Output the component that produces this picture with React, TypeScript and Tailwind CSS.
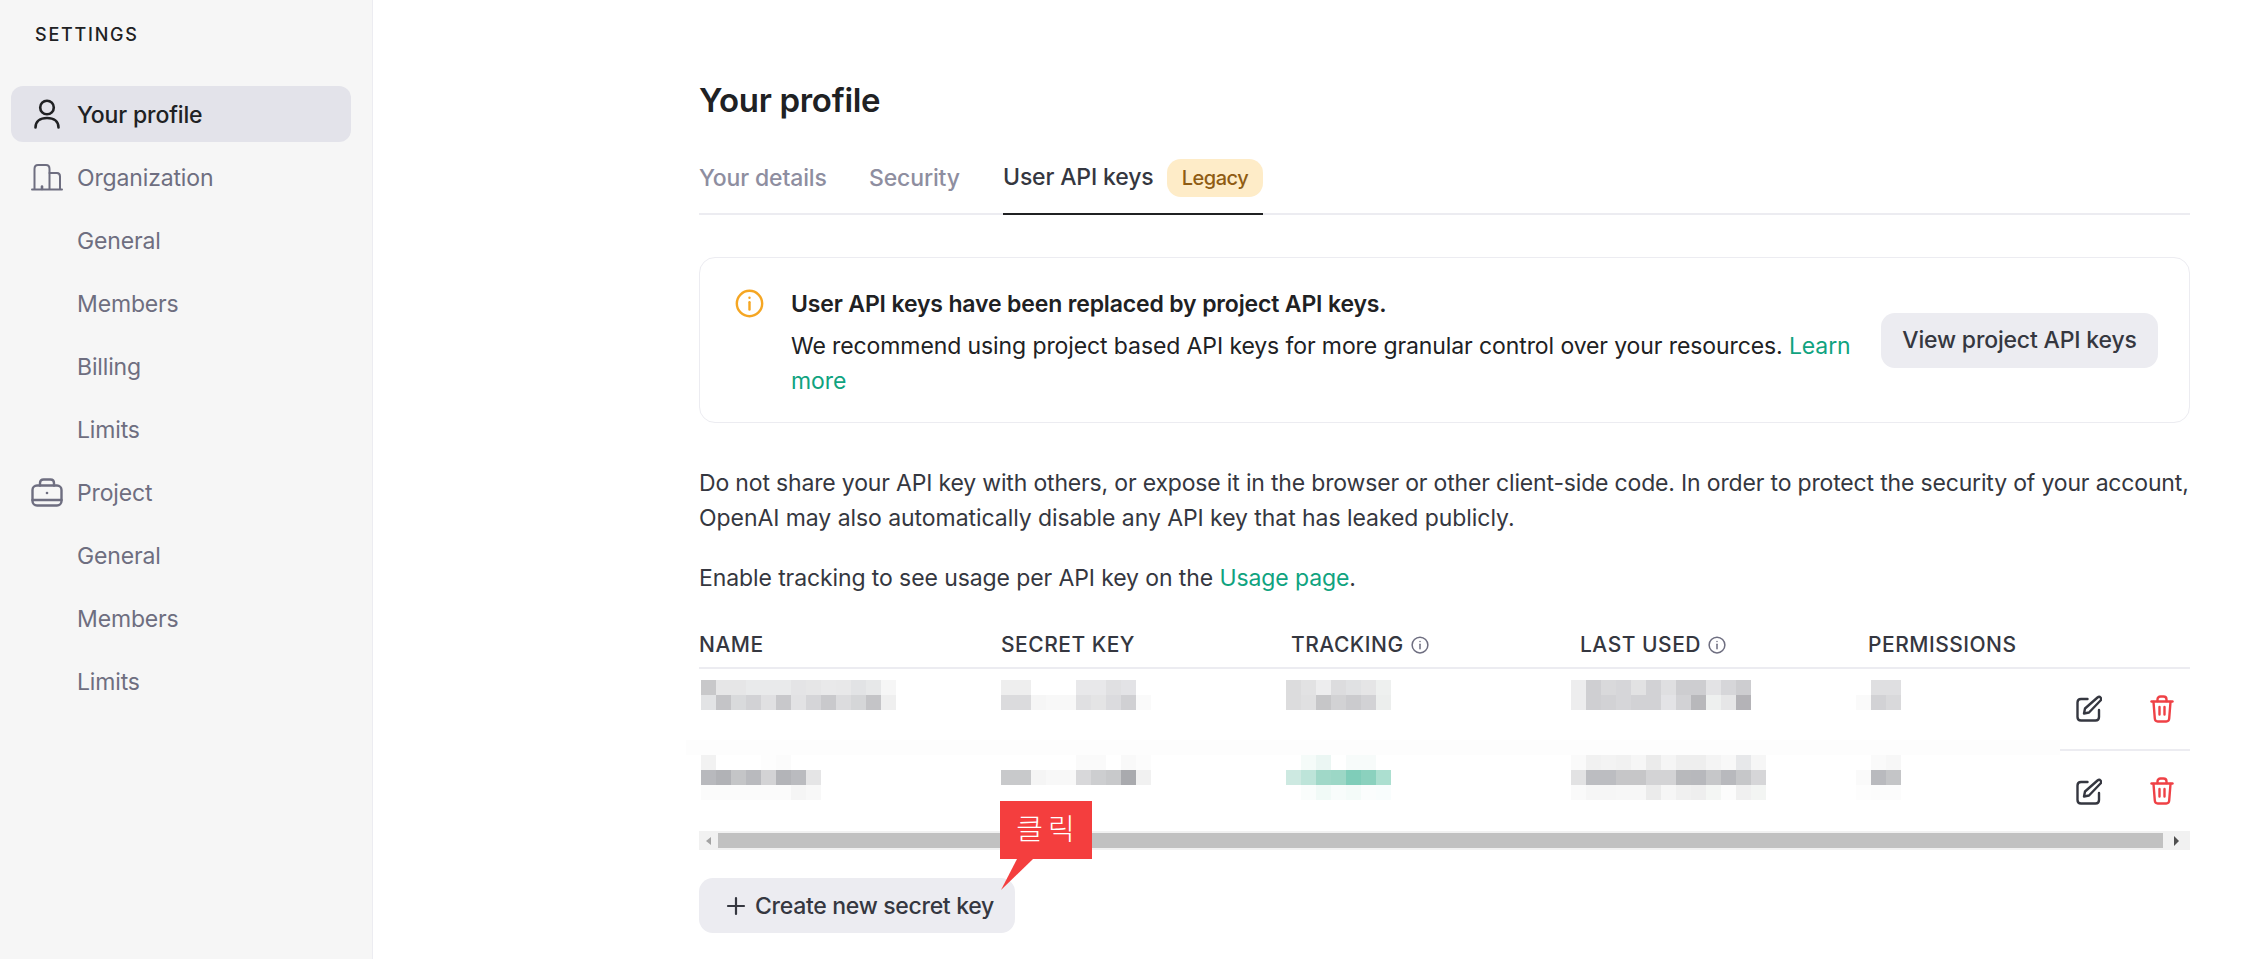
import type { ReactNode } from "react";

type Rows = string[][];
const name1: Rows = [["#c8c8ca","#e6e6e7","#e6e6e7","#e9eaeb","#e9eaeb","#e9eaeb","#e4e4e6","#e6e6e7","#e9e9ea","#e8e8e9","#e2e3e5","#e7e8e9","#f6f6f6"],["#e2e3e5","#c4c4c7","#d9dadc","#d2d2d5","#e0e0e2","#c8c8cb","#e2e2e4","#d5d5d8","#c9c9cc","#dcdcde","#d5d6d8","#c4c4c7","#efefef"]];
const name2: Rows = [["#f2f2f2","#fff","#fff","#fff","#fdfdfd","#fbfbfb","#fff","#fff"],["#b8b9bd","#b1b2b6","#c4c5c7","#b9babe","#d3d3d5","#b3b4b8","#babbbf","#e5e5e6"],["#fbfbfb","#fbfbfb","#fbfbfb","#fbfbfb","#fbfbfb","#fbfbfb","#f5f5f5","#f8f8f8"]];
const key1: Rows = [["#eeeeee","#eeeeee","#fff","#fff","#fff","#e8e8ea","#e8e8ea","#e0e0e2","#e3e3e6","#fff"],["#dbdbdd","#dbdbdd","#f6f6f6","#f8f8f8","#f8f8f8","#e0e0e2","#e4e4e5","#dbdbde","#d0d0d3","#fafafa"]];
const key2: Rows = [["#fff","#fff","#fff","#fff","#fff","#fafafa","#fafafa","#fff","#f9f9f9","#fcfcfc"],["#c8c9cb","#c8c9cb","#f5f5f5","#f8f8f8","#f8f8f8","#d8d8da","#cdced0","#c8c9cb","#a9aaae","#f1f1f1"],["#fff","#fff","#fff","#fff","#fff","#fff","#fff","#fff","#fff","#fff"]];
const track1: Rows = [["#dcdcdd","#e2e2e3","#ededee","#dcdcde","#e0e1e3","#e5e5e6","#eef0ef"],["#dcdcdd","#e0e0e1","#c6c6c8","#d2d2d4","#cbcbce","#d2d2d5","#eceeed"]];
const track2: Rows = [["#fff","#f5fbf9","#ebf6f3","#fff","#f7fbfa","#f7fbfa","#fff"],["#cde9e1","#bde4d9","#a0d8c8","#9cd7c6","#7fcdb9","#8bd1be","#acdfd0"],["#fff","#fafdfc","#f1faf7","#f8fcfb","#f4fbf9","#fbfdfd","#f9fdfd"]];
const last1: Rows = [["#ededee","#cfcfd2","#d9d9db","#d6d6d9","#e2e2e3","#d2d2d5","#dfdfe1","#cdcdd0","#cdcdd0","#e3e3e5","#d6d6d9","#cdcdd0"],["#ededee","#cfcfd2","#d2d2d5","#d6d6d9","#d2d2d5","#d2d2d5","#e3e3e6","#d2d2d5","#b8b8bb","#eef0ef","#e6e6e7","#b4b3b7"]];
const last2: Rows = [["#fafafa","#f1f1f1","#f3f3f3","#f1f1f1","#f6f6f6","#ebebeb","#f5f5f5","#eeeeee","#eeeeee","#f4f4f4","#f8f8f8","#e7e8ea","#f6f6f6"],["#e2e2e3","#bcbdc1","#bcbdc1","#c6c6c8","#c6c6c8","#d3d3d5","#d3d3d5","#b8b9bc","#b7b8bc","#c6c7c9","#b8b9bd","#c6c7c9","#d6d6d8"],["#fafafa","#f6f6f6","#f6f6f6","#f7f7f7","#f7f7f7","#ebebeb","#f6f6f6","#f0f0f0","#eeeeee","#f4f6f4","#fcfcfc","#f0f0f0","#f3f5f3"]];
const perm1: Rows = [["#fff","#dfdfe1","#dfdfe1"],["#fafafa","#d2d2d5","#d9d9db"]];
const perm2: Rows = [["#fff","#fafafa","#f7f7f7"],["#fafafa","#b9babe","#c4c5c7"],["#fdfdfd","#fcfcfc","#fcfcfc"]];

function Mosaic({ rows }: { rows: Rows }) {
  return (
    <div className="flex flex-col">
      {rows.map((r, i) => (
        <div key={i} className="flex">
          {r.map((c, j) => (
            <div key={j} className="w-[15px] h-[15px]" style={{ backgroundColor: c }} />
          ))}
        </div>
      ))}
    </div>
  );
}

const UserIcon = () => (
  <svg width="26" height="30" viewBox="0 0 26 30" fill="none" stroke="#202123" strokeWidth="2.6" strokeLinecap="round">
    <circle cx="13" cy="8.500" r="6.800" />
    <path d="M1.500 28.500c0-6 4.500-9.500 11.500-9.500s11.500 3.500 11.500 9.500" />
  </svg>
);
const OrgIcon = () => (
  <svg width="32" height="27" viewBox="0 0 32 27" fill="none" stroke="#6e6e80" strokeWidth="2" strokeLinecap="round">
    <path d="M1 25.500h30" />
    <path d="M3.500 25V5C3.500 2.500 5 1 7 1h8c2 0 3.500 1.500 3.500 4v20" />
    <path d="M18.500 9H26c2 0 3 1.500 3 3.500V25" />
    <path d="M11 22.500v2.500" strokeWidth="2.600" />
  </svg>
);
const CaseIcon = () => (
  <svg width="32" height="29" viewBox="0 0 32 29" fill="none" stroke="#6e6e80" strokeWidth="2.4" strokeLinecap="round" strokeLinejoin="round">
    <rect x="1.500" y="7.500" width="29" height="20" rx="4.500" />
    <path d="M9 7.500V5c0-2.200 1.300-3.500 3.500-3.500h7C21.700 1.500 23 2.800 23 5v2.500" />
    <path d="M1.500 22h29" />
    <circle cx="16" cy="15" r="1.300" fill="#6e6e80" stroke="none" />
  </svg>
);
const InfoIcon = ({ size, color, sw }: { size: number; color: string; sw: number }) => (
  <svg width={size} height={size} viewBox="0 0 24 24" fill="none" stroke={color} strokeWidth={sw} strokeLinecap="round">
    <circle cx="12" cy="12" r="10.500" />
    <path d="M12 11v6" />
    <path d="M12 7.200v.1" />
  </svg>
);
const EditIcon = () => (
  <svg width="26" height="27" viewBox="0 0 26 27" fill="none" stroke="#353740" strokeWidth="2.4" strokeLinecap="round" strokeLinejoin="round" className="shrink-0">
    <path d="M11.500 4H5C3 4 1.500 5.500 1.500 7.500V22c0 2 1.500 3.500 3.500 3.500h14.500c2 0 3.500-1.500 3.500-3.500v-7" />
    <path d="M21.500 2.500c1-.8 2.300-.8 3 0s.8 2 0 3L13 17.500l-5 1 1-5z" />
  </svg>
);
const TrashIcon = () => (
  <svg width="24" height="28" viewBox="0 0 24 28" fill="none" stroke="#ef4146" strokeWidth="2.4" strokeLinecap="round" strokeLinejoin="round" className="shrink-0">
    <path d="M1.500 6.500h21" />
    <path d="M7.500 6V4.500c0-1.800 1.200-3 3-3h3c1.800 0 3 1.200 3 3V6" />
    <path d="M3.500 7l1.300 16.500c.1 1.800 1.300 3 3 3h8.400c1.700 0 2.900-1.200 3-3L20.500 7" />
    <path d="M9.500 12v7.500M14.500 12v7.500" />
  </svg>
);

function SideItem({ label, icon, active }: { label: string; icon?: ReactNode; active?: boolean }) {
  return (
    <div className={`flex h-[56px] items-center mb-[7px] rounded-[12px] ${active ? "bg-[#e3e3ea] text-[#202123] font-medium" : "text-[#6e6e80]"}`}>
      <div className="w-[66px] pl-[18px] shrink-0">
        <div className="w-[36px] flex justify-center">{icon}</div>
      </div>
      <span className="text-[23px] tracking-[-0.15px] mt-[2px]">{label}</span>
    </div>
  );
}

function Th({ label, w, info }: { label: string; w: string; info?: boolean }) {
  return (
    <div className={`${w} flex items-center gap-[7px] text-[21px] font-medium tracking-[0.5px] text-[#353740]`}>
      {label}
      {info && <InfoIcon size={18} color="#6e6e80" sw={2} />}
    </div>
  );
}

export default function App() {
  return (
    <div className="font-['Inter','Liberation_Sans',sans-serif] flex h-[959px] w-[2247px] overflow-hidden bg-white text-[#353740]">
      <aside className="w-[373px] shrink-0 bg-[#f6f6f6] border-r border-[#ececf1] px-[11px] pt-[24px]">
        <div className="pl-[24px] text-[18px] tracking-[1.75px] font-medium text-[#202123] leading-[22px] mb-[40px]">SETTINGS</div>
        <div className="w-[340px]">
          <SideItem label="Your profile" icon={<UserIcon />} active />
          <SideItem label="Organization" icon={<OrgIcon />} />
          <SideItem label="General" />
          <SideItem label="Members" />
          <SideItem label="Billing" />
          <SideItem label="Limits" />
          <SideItem label="Project" icon={<CaseIcon />} />
          <SideItem label="General" />
          <SideItem label="Members" />
          <SideItem label="Limits" />
        </div>
      </aside>
      <main className="relative flex-1 pl-[326px] pr-[57px] pt-[78px]">
        <h1 className="text-[33px] leading-[44px] font-semibold text-[#202123] tracking-[-0.3px]">Your profile</h1>
        <div className="flex h-[93px] items-start border-b-2 border-[#ececf1] text-[23px] font-medium tracking-[-0.15px] whitespace-nowrap">
          <div className="h-[93px] flex items-center pt-[20px] text-[#8e8ea0] w-[170px]">Your details</div>
          <div className="h-[93px] flex items-center pt-[20px] text-[#8e8ea0] w-[134px]">Security</div>
          <div className="h-[93px] flex items-center pt-[20px] border-b-2 border-[#202123] gap-[14px] w-[260px]">
            <span className="w-[150px] shrink-0">User API keys</span>
            <span className="h-[38px] w-[96px] shrink-0 flex items-center justify-center rounded-[14px] bg-[#feecc8] text-[#8f5c13] text-[20px] tracking-[-0.5px]">Legacy</span>
          </div>
        </div>
        <section className="mt-[42px] h-[166px] flex items-center justify-between rounded-[16px] border border-[#ececf1] pl-[35px] pr-[31px]">
          <div className="flex items-start gap-[27px] pt-[6px]">
            <div className="pt-[2px]"><InfoIcon size={29} color="#f5a623" sw={2} /></div>
            <div className="w-[1065px] text-[23px] leading-[35px] tracking-[-0.1px] text-[#202123]">
              <div className="font-semibold mb-[7px] tracking-[-0.15px]">User API keys have been replaced by project API keys.</div>
              <div>We recommend using project based API keys for more granular control over your resources. <span className="text-[#10a37f]">Learn</span> <span className="text-[#10a37f]">more</span></div>
            </div>
          </div>
          <div className="h-[55px] w-[277px] rounded-[14px] bg-[#ececf1] flex items-center justify-center font-medium text-[23px] tracking-[-0.17px]">View project API keys</div>
        </section>
        <p className="mt-[43px] text-[23px] leading-[35px] tracking-[-0.17px] whitespace-nowrap">Do not share your API key with others, or expose it in the browser or other client-side code. In order to protect the security of your account,<br /><span className="tracking-[-0.06px]">OpenAI may also automatically disable any API key that has leaked publicly.</span></p>
        <p className="mt-[25px] text-[23px] leading-[35px] tracking-[-0.1px]">Enable tracking to see usage per API key on the <span className="text-[#10a37f]">Usage page</span>.</p>

        <div className="mt-[21px] flex h-[52px] border-b-2 border-[#ececf1] pt-[6px] items-center">
          <Th label="NAME" w="w-[302px]" />
          <Th label="SECRET KEY" w="w-[290px]" />
          <Th label="TRACKING" w="w-[289px]" info />
          <Th label="LAST USED" w="w-[288px]" info />
          <Th label="PERMISSIONS" w="w-[190px]" />
        </div>
        <div className="relative flex h-[82px]">
          <div className="absolute left-[-13px] top-[71px] w-[1374px] h-[15px] bg-[#fdfdfd]" />
          <div className="w-[302px] pl-[2px] pt-[11px]"><Mosaic rows={name1} /></div>
          <div className="w-[285px] pt-[11px]"><Mosaic rows={key1} /></div>
          <div className="w-[285px] pt-[11px]"><Mosaic rows={track1} /></div>
          <div className="w-[285px] pt-[11px]"><Mosaic rows={last1} /></div>
          <div className="w-[204px] pt-[11px]"><Mosaic rows={perm1} /></div>
          <div className="flex-1 border-b-2 border-[#ececf1] flex items-center gap-[48px] pl-[16px] pb-[1px]"><EditIcon /><TrashIcon /></div>
        </div>
        <div className="flex h-[80px]">
          <div className="w-[302px] pl-[2px] pt-[4px]"><Mosaic rows={name2} /></div>
          <div className="w-[285px] pt-[4px]"><Mosaic rows={key2} /></div>
          <div className="w-[285px] pt-[4px]"><Mosaic rows={track2} /></div>
          <div className="w-[285px] pt-[4px]"><Mosaic rows={last2} /></div>
          <div className="w-[204px] pt-[4px]"><Mosaic rows={perm2} /></div>
          <div className="flex-1 flex items-center gap-[48px] pl-[16px]"><EditIcon /><TrashIcon /></div>
        </div>
        <div className="flex h-[19px] bg-[#f1f1f1] items-center">
          <div className="w-[19px] flex justify-center"><div className="w-0 h-0 border-y-[4px] border-y-transparent border-r-[5px] border-r-[#a3a3a3]" /></div>
          <div className="flex-1 h-[15px] bg-[#c1c1c1]" />
          <div className="w-[27px] flex justify-center"><div className="w-0 h-0 border-y-[5px] border-y-transparent border-l-[5px] border-l-[#505050]" /></div>
        </div>
        <div className="mt-[28px] h-[55px] w-[316px] rounded-[14px] bg-[#ececf1] flex items-center pl-[27px] gap-[9px] font-medium text-[23px] tracking-[-0.3px]">
          <svg width="20" height="20" viewBox="0 0 20 20" stroke="#353740" strokeWidth="2.2" strokeLinecap="round"><path d="M10 2v16M2 10h16" /></svg>
          <span className="mt-[1px]">Create new secret key</span>
        </div>

        <div className="absolute left-[627px] top-[801px]">
          <div className="w-[92px] h-[58px] pb-[4px] pl-[4px] bg-[#f43e3e] flex items-center justify-center text-white text-[29px] tracking-[5px] font-['Noto_Sans_CJK_KR',sans-serif] font-light">클릭</div>
          <svg className="absolute left-0 top-[58px]" width="34" height="32" viewBox="0 0 34 32"><path d="M17 0H33L1 31z" fill="#f43e3e" /></svg>
        </div>
      </main>
    </div>
  );
}
